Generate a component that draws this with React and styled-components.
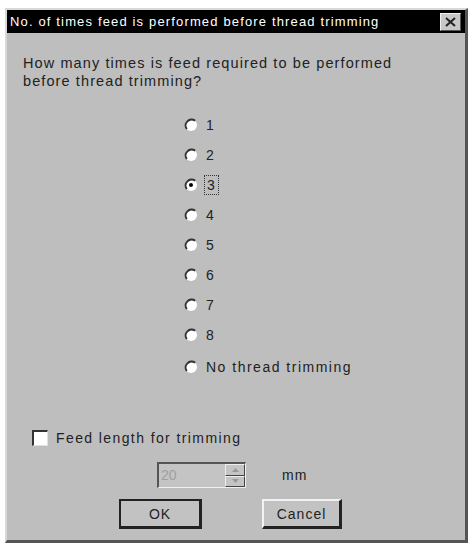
import React from 'react';
import styled, { createGlobalStyle } from 'styled-components';

const GlobalStyle = createGlobalStyle`
  body {
    margin: 0;
    background: #ffffff;
    font-family: "Liberation Sans", Arial, sans-serif;
  }
`;

const Window = styled.div`
  box-sizing: border-box;
  width: 463px;
  height: 535px;
  margin: 8px 0 0 5px;
  background: #bebebe;
  border-top: 2px solid #d8d8d8;
  border-left: 2px solid #d8d8d8;
  border-right: 3px solid #555;
  border-bottom: 3px solid #555;
  display: flex;
  flex-direction: column;
`;

const TitleBar = styled.div`
  height: 23px;
  background: #000;
  display: flex;
  align-items: center;
  justify-content: space-between;
  padding: 0 4px 0 3px;
`;

const TitleText = styled.span`
  color: #fff;
  font-size: 13px;
  letter-spacing: 1.15px;
`;

const CloseButton = styled.div`
  box-sizing: border-box;
  width: 21px;
  height: 18px;
  background: #c8c8c8;
  border-top: 1px solid #f0f0f0;
  border-left: 1px solid #f0f0f0;
  border-right: 1px solid #555;
  border-bottom: 1px solid #555;
  display: flex;
  align-items: center;
  justify-content: center;
`;

const Body = styled.div`
  flex: 1;
  display: flex;
  flex-direction: column;
  padding: 21px 0 0 16px;
`;

const Question = styled.p`
  margin: 0;
  font-size: 14.5px;
  line-height: 18px;
  letter-spacing: 1.1px;
  color: #222;
`;

const RadioGroup = styled.div`
  display: flex;
  flex-direction: column;
  margin: 20px 0 0 161px;
`;

const RadioRow = styled.label`
  display: flex;
  align-items: center;
  height: ${p => (p.$tall ? 33 : 30)}px;
  font-size: 14px;
  color: #222;
  letter-spacing: 1.5px;
  gap: 8px;
`;

const Focus = styled.span`
  outline: 1px dotted #333;
  outline-offset: 1px;
  padding: 0 1px;
`;

const CheckRow = styled.div`
  display: flex;
  align-items: center;
  gap: 8px;
  margin: 47px 0 0 9px;
  font-size: 14px;
  letter-spacing: 1.4px;
  color: #222;
`;

const CheckBox = styled.span`
  box-sizing: border-box;
  width: 16px;
  height: 16px;
  background: #fff;
  border-top: 2px solid #333;
  border-left: 2px solid #333;
  border-right: 1px solid #e0e0e0;
  border-bottom: 1px solid #e0e0e0;
`;

const SpinRow = styled.div`
  display: flex;
  align-items: center;
  margin: 16px 0 0 134px;
  gap: 36px;
`;

const SpinBox = styled.div`
  box-sizing: border-box;
  width: 89px;
  height: 26px;
  display: flex;
  border-top: 2px solid #555;
  border-left: 2px solid #555;
  border-right: 1px solid #f0f0f0;
  border-bottom: 1px solid #f0f0f0;
  background: #c4c4c4;
`;

const SpinValue = styled.span`
  flex: 1;
  font-size: 14px;
  color: #a0a0a0;
  padding: 3px 0 0 2px;
`;

const SpinButtons = styled.div`
  width: 20px;
  display: flex;
  flex-direction: column;
`;

const SpinButton = styled.div`
  box-sizing: border-box;
  flex: 1;
  background: #c4c4c4;
  border-top: 1px solid #eee;
  border-left: 1px solid #eee;
  border-right: 1px solid #444;
  border-bottom: 1px solid #444;
  display: flex;
  align-items: center;
  justify-content: center;
`;

const Unit = styled.span`
  font-size: 14px;
  letter-spacing: 1px;
  color: #222;
`;

const ButtonRow = styled.div`
  display: flex;
  gap: 60px;
  margin: 11px 0 0 96px;
`;

const Button = styled.div`
  box-sizing: border-box;
  width: ${p => (p.$default ? 83 : 80)}px;
  height: 30px;
  display: flex;
  align-items: center;
  justify-content: center;
  font-size: 14px;
  letter-spacing: 1px;
  color: #222;
  background: #c2c2c2;
  border-top: 2px solid ${p => (p.$default ? '#222' : '#f2f2f2')};
  border-left: 2px solid ${p => (p.$default ? '#222' : '#f2f2f2')};
  border-right: 3px solid #222;
  border-bottom: 3px solid #222;
`;

const Radio = ({ checked }) => (
  <svg width="14" height="14" viewBox="0 0 14 14">
    <circle cx="7" cy="7" r="6" fill="#fff" />
    <path d="M2.8 11.2 A6 6 0 0 1 11.2 2.8" fill="none" stroke="#333" strokeWidth="2" />
    {checked && <circle cx="7" cy="7" r="2" fill="#000" />}
  </svg>
);

const options = ['1', '2', '3', '4', '5', '6', '7', '8'];

export default function App() {
  return (
    <>
      <GlobalStyle />
      <Window>
        <TitleBar>
          <TitleText>No. of times feed is performed before thread trimming</TitleText>
          <CloseButton>
            <svg width="11" height="10" viewBox="0 0 11 10">
              <path d="M1 1 L10 9 M10 1 L1 9" stroke="#222" strokeWidth="2" />
            </svg>
          </CloseButton>
        </TitleBar>
        <Body>
          <Question>
            How many times is feed required to be performed
            <br />
            before thread trimming?
          </Question>
          <RadioGroup>
            {options.map(o => (
              <RadioRow key={o}>
                <Radio checked={o === '3'} />
                {o === '3' ? <Focus>{o}</Focus> : o}
              </RadioRow>
            ))}
            <RadioRow $tall>
              <Radio />
              No thread trimming
            </RadioRow>
          </RadioGroup>
          <CheckRow>
            <CheckBox />
            Feed length for trimming
          </CheckRow>
          <SpinRow>
            <SpinBox>
              <SpinValue>20</SpinValue>
              <SpinButtons>
                <SpinButton>
                  <svg width="7" height="4" viewBox="0 0 7 4"><path d="M0 4 L3.5 0 L7 4 Z" fill="#999" /></svg>
                </SpinButton>
                <SpinButton>
                  <svg width="7" height="4" viewBox="0 0 7 4"><path d="M0 0 L3.5 4 L7 0 Z" fill="#999" /></svg>
                </SpinButton>
              </SpinButtons>
            </SpinBox>
            <Unit>mm</Unit>
          </SpinRow>
          <ButtonRow>
            <Button $default>OK</Button>
            <Button>Cancel</Button>
          </ButtonRow>
        </Body>
      </Window>
    </>
  );
}
